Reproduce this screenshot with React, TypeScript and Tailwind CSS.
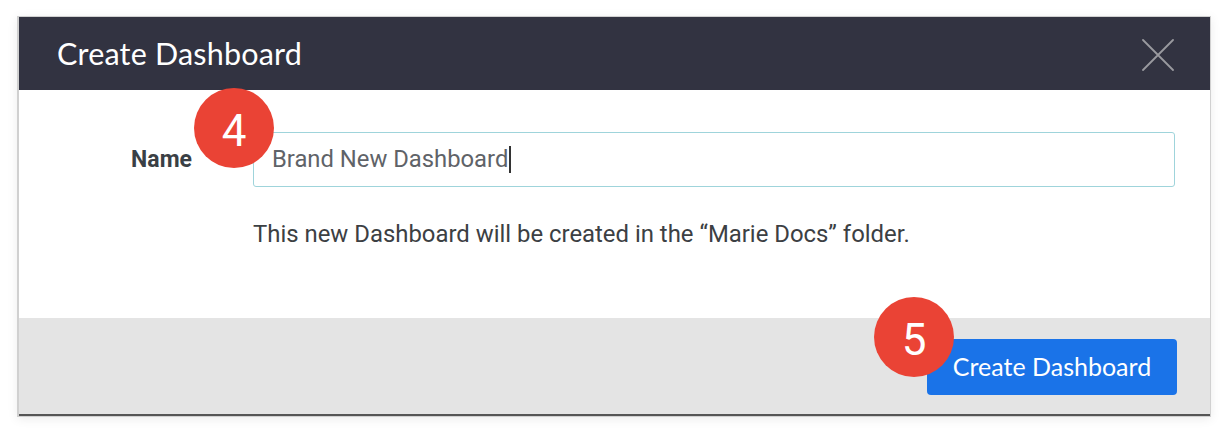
export default function App() {
  return (
    <div className="w-[1228px] h-[436px] bg-white pt-[16px] pl-[17px]" style={{ fontFamily: "Roboto, 'Liberation Sans', sans-serif" }}>
      <div className="relative w-[1194px] h-[401px] border border-[#d0d0d0] border-l-2 shadow-[0_2px_10px_rgba(0,0,0,0.08)] flex flex-col">
        <div className="h-[73px] bg-[#323341] flex items-center justify-between pl-[38px] pr-[36px]">
          <h1 className="text-white text-[30.5px] tracking-[0.2px]" style={{ fontFamily: "Lato, sans-serif" }}>
            Create Dashboard
          </h1>
          <svg width="32" height="32" viewBox="0 0 32 32" className="mt-[2px]">
            <path d="M1 1 L31 31 M31 1 L1 31" stroke="#9a9a9f" strokeWidth="1.8" strokeLinecap="round" />
          </svg>
        </div>

        <div className="h-[228px] bg-white pt-[42px]">
          <div className="flex items-center">
            <label className="w-[173px] text-right text-[23px] font-bold text-[#3a3f45] mt-[2px]">Name</label>
            <div className="ml-[61px] w-[922px] h-[55px] border border-[#9fd4db] rounded-[3px] flex items-center pl-[18px]">
              <span className="text-[23.8px] text-[#5f6368]">Brand New Dashboard</span>
              <span className="w-[2px] h-[27px] bg-[#333] ml-[1px]" />
            </div>
          </div>
          <p className="ml-[234px] mt-[33px] text-[23.9px] leading-[28px] text-[#3c4043]">
            This new Dashboard will be created in the “Marie Docs” folder.
          </p>
        </div>

        <div className="flex-1 bg-[#e4e4e4] border-b-2 border-[#555] flex justify-end items-start pt-[21px] pr-[33px]">
          <button className="w-[250px] h-[56px] bg-[#1a73e8] rounded-[4px] text-white text-[25px]" style={{ fontFamily: "Lato, sans-serif" }}>
            Create Dashboard
          </button>
        </div>

        <div className="absolute left-[175px] top-[71px] w-[80px] h-[80px] rounded-full bg-[#ea4335] text-white text-[44px] flex items-center justify-center pt-[6px]">
          4
        </div>
        <div className="absolute left-[855px] top-[280px] w-[80px] h-[80px] rounded-full bg-[#ea4335] text-white text-[44px] flex items-center justify-center pt-[6px]">
          5
        </div>
      </div>
    </div>
  );
}
